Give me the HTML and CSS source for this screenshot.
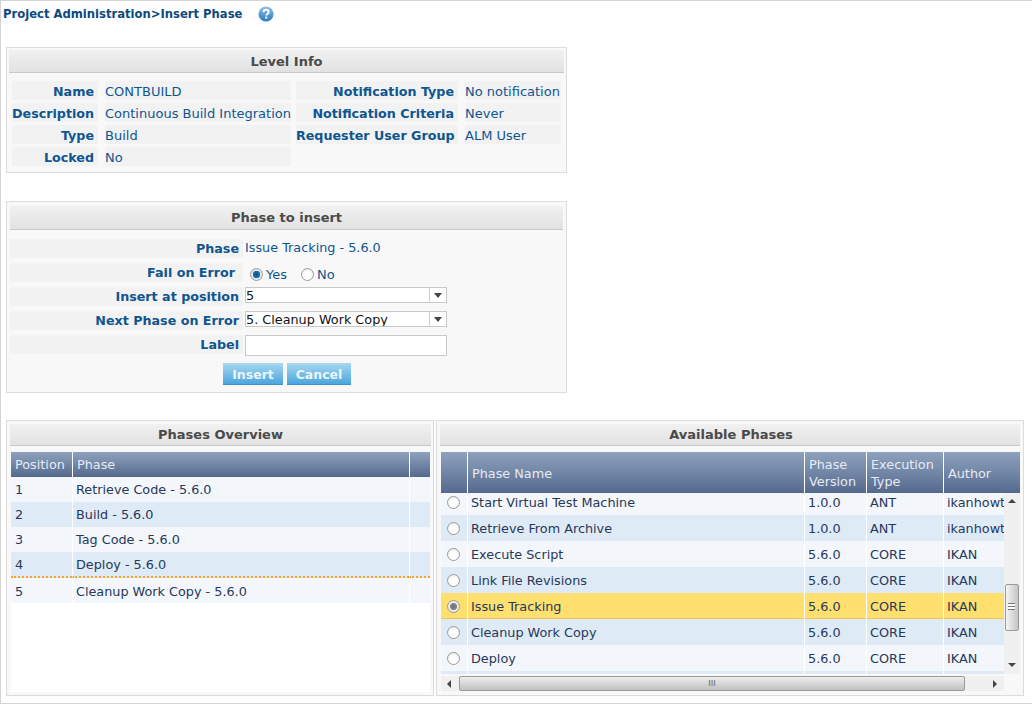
FILE: index.html
```html
<!DOCTYPE html>
<html lang="en">
<head>
<meta charset="utf-8">
<title>Insert Phase</title>
<link rel="stylesheet" href="styles.css">
</head>
<body>
<div class="page">
  <div class="crumb">
    <span>Project Administration&gt;Insert Phase</span>
    <svg class="help" width="16" height="16" viewBox="0 0 16 16"><defs><linearGradient id="hg" x1="0" y1="0" x2="0" y2="1"><stop offset="0" stop-color="#8fc0ea"/><stop offset="1" stop-color="#2a78bd"/></linearGradient></defs><circle cx="8" cy="8" r="7.6" fill="url(#hg)"/><path d="M5.6 6.2c0-1.5 1-2.4 2.5-2.4s2.5.9 2.5 2.2c0 1.9-2.3 1.9-2.3 3.6" fill="none" stroke="#fff" stroke-width="1.9"/><rect x="7.2" y="10.6" width="2" height="2" fill="#fff"/></svg>
  </div>

  <section class="panel level">
    <h2 class="phead">Level Info</h2>
    <div class="level-grid">
      <div class="lab">Name</div><div class="val">CONTBUILD</div><div class="lab">Notification Type</div><div class="val">No notification</div>
      <div class="lab">Description</div><div class="val">Continuous Build Integration</div><div class="lab">Notification Criteria</div><div class="val">Never</div>
      <div class="lab">Type</div><div class="val">Build</div><div class="lab">Requester User Group</div><div class="val">ALM User</div>
      <div class="lab">Locked</div><div class="val">No</div>
    </div>
  </section>

  <section class="panel insert">
    <h2 class="phead">Phase to insert</h2>
    <div class="form-grid">
      <div class="flab">Phase</div><div class="fval">Issue Tracking - 5.6.0</div>
      <div class="flab pad">Fail on Error</div>
      <div class="fval radios"><span class="radio on"></span><span class="rtext">Yes</span><span class="radio"></span><span class="rtext">No</span></div>
      <div class="flab">Insert at position</div><div class="fctl"><div class="select"><span class="stext">5</span><span class="sbtn"></span></div></div>
      <div class="flab">Next Phase on Error</div><div class="fctl"><div class="select"><span class="stext">5. Cleanup Work Copy</span><span class="sbtn"></span></div></div>
      <div class="flab">Label</div><div class="fctl"><div class="input"></div></div>
    </div>
    <div class="buttons"><button class="btn ins" type="button">Insert</button><button class="btn can" type="button">Cancel</button></div>
  </section>

  <div class="bottom">
    <section class="panel overview">
      <h2 class="phead">Phases Overview</h2>
      <div class="ovbody">
        <table class="tbl ov">
          <colgroup><col class="c-pos"><col class="c-ph"><col class="c-x"></colgroup>
          <thead><tr><th>Position</th><th>Phase</th><th></th></tr></thead>
          <tbody>
            <tr class="odd"><td>1</td><td>Retrieve Code - 5.6.0</td><td></td></tr>
            <tr class="even"><td>2</td><td>Build - 5.6.0</td><td></td></tr>
            <tr class="odd"><td>3</td><td>Tag Code - 5.6.0</td><td></td></tr>
            <tr class="even mark"><td>4</td><td>Deploy - 5.6.0</td><td></td></tr>
            <tr class="odd last"><td>5</td><td>Cleanup Work Copy - 5.6.0</td><td></td></tr>
          </tbody>
        </table>
      </div>
    </section>

    <section class="panel avail">
      <h2 class="phead">Available Phases</h2>
      <table class="tbl av avh">
        <colgroup><col class="a1"><col class="a2"><col class="a3"><col class="a4"><col class="a5"></colgroup>
        <thead><tr><th></th><th>Phase Name</th><th>Phase Version</th><th>Execution Type</th><th>Author</th></tr></thead>
      </table>
      <div class="scroller">
        <div class="viewport">
          <table class="tbl av avb">
            <colgroup><col class="a1"><col class="a2"><col class="a3"><col class="a4"><col class="a5b"></colgroup>
            <tbody>
              <tr class="odd"><td><span class="radio"></span></td><td>Start Virtual Test Machine</td><td>1.0.0</td><td>ANT</td><td>ikanhowto</td></tr>
              <tr class="even"><td><span class="radio"></span></td><td>Retrieve From Archive</td><td>1.0.0</td><td>ANT</td><td>ikanhowto</td></tr>
              <tr class="odd"><td><span class="radio"></span></td><td>Execute Script</td><td>5.6.0</td><td>CORE</td><td>IKAN</td></tr>
              <tr class="even"><td><span class="radio"></span></td><td>Link File Revisions</td><td>5.6.0</td><td>CORE</td><td>IKAN</td></tr>
              <tr class="sel"><td><span class="radio pick"></span></td><td>Issue Tracking</td><td>5.6.0</td><td>CORE</td><td>IKAN</td></tr>
              <tr class="even"><td><span class="radio"></span></td><td>Cleanup Work Copy</td><td>5.6.0</td><td>CORE</td><td>IKAN</td></tr>
              <tr class="odd"><td><span class="radio"></span></td><td>Deploy</td><td>5.6.0</td><td>CORE</td><td>IKAN</td></tr>
              <tr class="even"><td></td><td></td><td></td><td></td><td></td></tr>
            </tbody>
          </table>
        </div>
        <div class="vbar">
          <span class="arrow up"></span>
          <div class="vthumb"><span class="grip"></span></div>
          <span class="arrow down"></span>
        </div>
      </div>
      <div class="hbar">
        <span class="arrow left"></span>
        <div class="hthumb"><span class="hgrip">III</span></div>
        <span class="arrow right"></span>
      </div>
    </section>
  </div>
</div>
</body>
</html>
```
FILE: styles.css
```css
* { box-sizing: border-box; }
html, body { margin: 0; padding: 0; background: #fff; }
body { width: 1032px; height: 704px; overflow: hidden; font-family: "DejaVu Sans", Verdana, sans-serif; font-size: 13px; color: #0f5590; }
.page { width: 1032px; height: 704px; border: 1px solid #d4d4d4; border-right: 0; padding: 0 5px; background: #fff; }
.crumb { height: 46px; margin-left: -3px; padding-top: 6px; font-size: 11.6px; font-weight: bold; color: #0d4a7c; display: flex; align-items: flex-start; line-height: 15px; }
.help { margin-left: 16px; margin-top: -1px; }
.panel { border: 1px solid #dcdcdc; background: #f8f8f8; }
.phead { margin: 0; font-size: 13px; font-weight: bold; text-align: center; color: #4a4a4a; background: linear-gradient(#f1f1f1, #e2e2e2); border-bottom: 1px solid #c8c8c8; }
.level { width: 561px; height: 126px; padding: 2px 2px 0; }
.level .phead { height: 23px; line-height: 24px; }
.level-grid { display: grid; grid-template-columns: 86px 193px 167px 103px; row-gap: 3px; margin: 8px 0 0 3px; }
.lab, .val { height: 19px; line-height: 21px; background: #f2f2f2; white-space: nowrap; }
.lab { font-weight: bold; text-align: right; font-size: 12.7px; padding-right: 4px; }
.val { margin-left: 7px; }
.level-grid .lab:nth-child(4n+3) { margin-left: 5px; }
.insert { width: 561px; height: 192px; margin-top: 28px; padding: 4px 3px 0; }
.insert .phead { height: 24px; line-height: 23px; }
.form-grid { display: grid; grid-template-columns: 233px 1fr; row-gap: 5px; margin-top: 9px; }
.flab { height: 19px; line-height: 19px; background: #f2f2f2; font-weight: bold; font-size: 12.7px; text-align: right; padding-right: 4px; white-space: nowrap; }
.flab.pad { padding-right: 8px; }
.fval { margin-left: 2px; height: 19px; line-height: 18px; font-size: 12.8px; }
.fctl { margin-left: 2px; height: 19px; }
.radios { display: flex; align-items: center; padding: 3px 0 0 5px; font-size: 13px; }
.rtext { margin: 0 14px 0 3px; line-height: 18px; padding-top: 2px; }
.radio { display: inline-block; width: 13px; height: 13px; border-radius: 50%; border: 1px solid #9b9b9b; background: radial-gradient(circle at 50% 60%, #fff 40%, #e2e2e2 100%); }
.radio.on { background: radial-gradient(circle, #0c4f86 0, #1b78b8 45%, #e9e9e9 52%, #dcdcdc 100%); }
.radio.pick { background: radial-gradient(circle, #6f6f6f 0, #888 42%, #f0f0f0 50%, #ddd 100%); }
.select { width: 202px; height: 16px; border: 1px solid #c8c8c8; background: #fff; display: flex; color: #111; overflow: hidden; font-size: 12.8px; }
.stext { flex: 1; padding-left: 0; line-height: 15px; height: 14px; overflow: hidden; }
.sbtn { width: 17px; border-left: 1px solid #ccc; position: relative; }
.sbtn::after { content: ""; position: absolute; left: 4px; top: 5px; border: 4px solid transparent; border-top: 5px solid #444; border-bottom: 0; }
.input { width: 202px; height: 21px; border: 1px solid #c8c8c8; background: #fff; }
.buttons { display: flex; justify-content: flex-start; gap: 4px; margin: 9px 0 0 213px; }
.btn { height: 22px; padding: 2px 0 0; border: 0; border-bottom: 1px solid #3d93cd; font: bold 12.5px "DejaVu Sans", Verdana, sans-serif; color: #eaf5fc; background: linear-gradient(#a9d8f2, #4ba5dc); }
.btn.ins { width: 60px; }
.btn.can { width: 64px; }
.bottom { display: flex; gap: 2px; margin-top: 27px; }
.overview { width: 428px; height: 276px; padding: 3px 2px 0 3px; }
.avail { width: 588px; height: 276px; padding: 3px 3px 0 3px; }
.bottom .phead { height: 22px; line-height: 22px; }
.avail .phead { padding-left: 2px; }
.ovbody { width: 419px; height: 240px; margin: 6px 0 0 1px; background: #fff; }
.tbl { border-collapse: separate; border-spacing: 0; table-layout: fixed; font-size: 12.8px; color: #27385a; }
.tbl th { font-weight: normal; text-align: left; color: #e6ebf3; background: linear-gradient(#8ea2be, #55698d); padding: 0 0 0 4px; border-left: 1px solid #fff; line-height: 17px; }
.tbl th:first-child { border-left: 0; }
.tbl td { padding: 0 0 0 3px; border-left: 1px solid #fff; white-space: nowrap; overflow: hidden; }
.tbl td:first-child { border-left: 0; }
.odd td { background: #f3f6fb; }
.even td { background: #deebf6; }
.ov { width: 419px; }
.c-pos { width: 61px; }
.c-ph { width: 337px; }
.c-x { width: 21px; }
.ov thead tr { height: 25px; }
.ov tbody tr { height: 25px; }
.ov td:first-child { padding-left: 4px; }
.mark td { height: 26px; border-bottom: 2px dotted #f5a623; }
.last td { padding-top: 2px; }
.av { margin: 0 0 0 1px; }
.avh { width: 579px; margin-top: 6px; }
.avh thead tr { height: 41px; }
.avh th { padding-top: 1px; }
.a1 { width: 26px; }
.a2 { width: 337px; }
.a3 { width: 62px; }
.a4 { width: 77px; }
.a5 { width: 77px; }
.a5b { width: 61px; }
.scroller { display: flex; height: 181px; margin-left: 1px; }
.viewport { width: 563px; height: 181px; overflow: hidden; }
.avb { width: 563px; margin: -4px 0 0 0; }
.avb tr { height: 26px; }
.avb td:first-child { text-align: center; padding: 0; }
.avb td:first-child .radio { display: block; margin: 0 0 0 6px; }
.sel td { background: #ffe06e; box-shadow: inset 0 -1px 0 #f0c35a; }
.vbar { width: 16px; background: #f0f0f0; position: relative; }
.vthumb { position: absolute; left: 1px; top: 91px; width: 14px; height: 47px; border: 1px solid #9a9a9a; border-radius: 2px; background: linear-gradient(90deg, #f4f4f4, #c4c4c4); }
.grip { position: absolute; left: 2px; top: 18px; width: 7px; height: 7px; border-top: 1px solid #777; border-bottom: 1px solid #777; background: linear-gradient(#fff 0 2px, #777 2px 3px, #fff 3px); }
.arrow { position: absolute; width: 0; height: 0; border: 4px solid transparent; }
.arrow.up { left: 4px; top: 6px; border-bottom: 4px solid #444; border-top: 0; }
.arrow.down { left: 4px; bottom: 7px; border-top: 4px solid #444; border-bottom: 0; }
.hbar { position: relative; height: 15px; width: 563px; margin: 2px 0 0 1px; background: #f0f0f0; }
.hthumb { position: absolute; left: 18px; top: 0; width: 506px; height: 15px; border: 1px solid #9a9a9a; border-radius: 2px; background: linear-gradient(#eee, #c0c0c0); text-align: center; font-size: 9px; line-height: 13px; color: #666; }
.hgrip { font-family: "Liberation Sans", sans-serif; }
.arrow.left { left: 6px; top: 4px; border-right: 4px solid #444; border-left: 0; }
.arrow.right { right: 7px; top: 4px; border-left: 4px solid #444; border-right: 0; }
```
